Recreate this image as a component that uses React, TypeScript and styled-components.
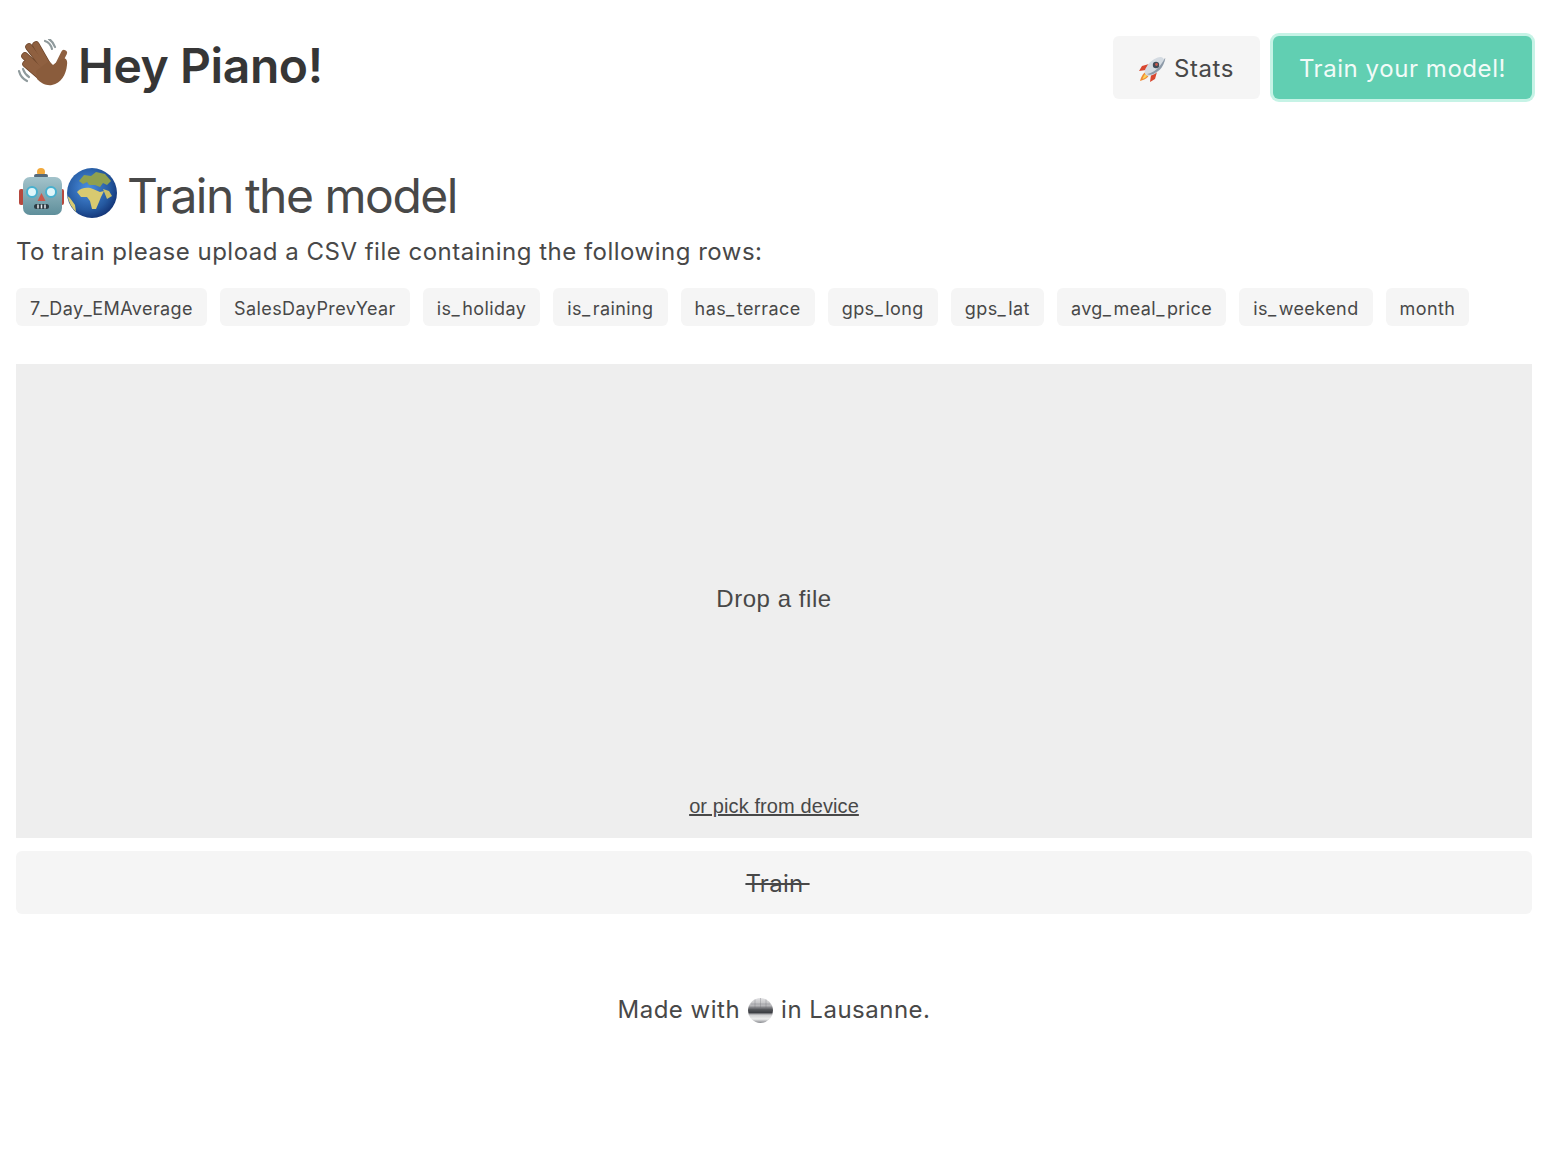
import React from "react";
import styled, { createGlobalStyle } from "styled-components";

const GlobalStyle = createGlobalStyle`
  html, body {
    margin: 0;
    padding: 0;
    background: #fff;
    color: #484848;
    font-family: Inter, "Liberation Sans", sans-serif;
  }
  * { box-sizing: border-box; }
`;

const Page = styled.div`
  padding: 36px 12px 0 16px;
  min-height: 1172px;
`;

const Header = styled.header`
  display: flex;
  justify-content: space-between;
  align-items: center;
  height: 63px;
`;

const Title = styled.h1`
  display: flex;
  align-items: center;
  gap: 8px;
  margin: 0;
  padding-bottom: 4px;
  font-size: 48px;
  line-height: 60px;
  font-weight: 600;
  letter-spacing: -0.4px;
  color: #363636;
`;

const Nav = styled.nav`
  display: flex;
  gap: 13px;
`;

const Button = styled.button<{ $primary?: boolean }>`
  display: flex;
  align-items: center;
  justify-content: center;
  gap: 8px;
  height: 63px;
  padding: 1px 26px 0;
  border: 0;
  border-radius: 6px;
  font-family: inherit;
  font-size: 24px;
  letter-spacing: 0.56px;
  background: ${(p) => (p.$primary ? "#61cfb2" : "#f5f5f5")};
  color: ${(p) => (p.$primary ? "#f2fbf8" : "#484848")};
  box-shadow: ${(p) => (p.$primary ? "0 0 0 3px #c6f3e6" : "none")};
`;

const Section = styled.section`
  margin-top: 64px;
`;

const Heading = styled.h2`
  display: flex;
  align-items: center;
  margin: 0;
  height: 64px;
  font-size: 48px;
  font-weight: 400;
  letter-spacing: -1.48px;
  color: #484848;
`;

const EmojiPair = styled.span`
  display: flex;
  align-items: center;
  gap: 1px;
  margin: 0 10px 4px 0;
`;

const Lead = styled.p`
  margin: 10px 0 0;
  font-size: 24px;
  line-height: 30px;
  letter-spacing: 0.5px;
`;

const Chips = styled.div`
  display: flex;
  gap: 13px;
  margin-top: 21px;
`;

const Chip = styled.span`
  display: flex;
  align-items: center;
  height: 38px;
  padding: 2px 14px 0;
  border-radius: 6px;
  background: #f5f5f5;
  font-size: 18px;
  letter-spacing: 0.42px;
  white-space: pre;
`;

const Underscore = styled.span<{ $tight?: boolean }>`
  letter-spacing: ${(p) => (p.$tight ? "0.5px" : "2.5px")};
`;

const DropZone = styled.div`
  display: flex;
  flex-direction: column;
  align-items: center;
  height: 474px;
  margin-top: 38px;
  padding: 220px 0 20px;
  background: #eee;
  font-family: "Liberation Sans", Arial, sans-serif;
`;

const DropText = styled.div`
  font-size: 24px;
  line-height: 30px;
  letter-spacing: 0.55px;
`;

const PickLink = styled.a`
  margin-top: auto;
  font-size: 20px;
  line-height: 24px;
  letter-spacing: 0.1px;
  color: #484848;
  text-decoration: underline;
`;

const TrainButton = styled.button`
  display: block;
  width: 100%;
  height: 63px;
  margin-top: 13px;
  padding: 1px 0 0;
  border: 0;
  border-radius: 6px;
  background: #f5f5f5;
  font-family: inherit;
  font-size: 24px;
  letter-spacing: 0.3px;
  color: #484848;
`;

const Struck = styled.span`
  margin-right: -7px;
  white-space: pre;
  word-spacing: -1px;
  text-decoration: line-through;
`;

const Footer = styled.footer`
  display: flex;
  justify-content: center;
  align-items: center;
  gap: 8px;
  margin-top: 79px;
  font-size: 24px;
  line-height: 34px;
  letter-spacing: 0.5px;
`;

const WaveIcon = () => (
  <svg width="54" height="54" viewBox="0 0 54 54" fill="none" strokeLinecap="round">
    <g stroke="#8f9a9c" strokeWidth="2.200">
      <path d="M29 2c3 1 6 4 7 8" />
      <path d="M33 0c3 2 5 5 6 8" />
      <path d="M3 32c1 4 4 8 8 10" />
      <path d="M7 30c1 3 3 6 6 8" />
    </g>
    <g stroke="#6b4328" strokeWidth="7.500">
      <path d="M32 27L20 6" />
      <path d="M28 28L13 8" />
      <path d="M25 32L9 17" />
      <path d="M24 37L10 25" />
    </g>
    <g stroke="#8f6040" strokeWidth="6">
      <path d="M32 27L20 6" />
      <path d="M28 28L13 8" />
      <path d="M25 32L9 17" />
      <path d="M24 37L10 25" />
      <path d="M42 26L48 14" />
    </g>
    <path
      d="M20 32L33 22L37 26C39 24 43 22 46 20C49 18 52 21 51 26C50 36 45 44 36 46C30 47 25 44 21 40z"
      fill="#8a5c3c"
    />
  </svg>
);

const RobotIcon = () => (
  <svg width="50" height="50" viewBox="0 0 50 50">
    <defs>
      <linearGradient id="head" x1="0" y1="0" x2="0" y2="1">
        <stop offset="0%" stopColor="#a3c3cb" />
        <stop offset="100%" stopColor="#5f8f9b" />
      </linearGradient>
    </defs>
    <circle cx="25" cy="4" r="4" fill="#f2a93b" />
    <rect x="18" y="6" width="14" height="4" rx="2" fill="#55697a" />
    <rect x="3" y="21" width="5" height="16" rx="2" fill="#b5483e" />
    <rect x="43" y="21" width="5" height="16" rx="2" fill="#b5483e" />
    <rect x="7" y="9" width="39" height="38" rx="7" fill="url(#head)" />
    <circle cx="16" cy="24" r="5" fill="#dff6fa" stroke="#47b0cf" strokeWidth="2" />
    <circle cx="35" cy="24" r="5" fill="#dff6fa" stroke="#47b0cf" strokeWidth="2" />
    <path d="M25.500 25l4 8h-8z" fill="#c9584c" />
    <rect x="18" y="36" width="15" height="5" rx="2.500" fill="#2c3a42" />
    <path d="M22 36.500v4M25.500 36.500v4M29 36.500v4" stroke="#e5ecef" strokeWidth="1.500" />
  </svg>
);

const GlobeIcon = () => (
  <svg width="50" height="50" viewBox="0 0 50 50">
    <defs>
      <radialGradient id="sea" cx="42%" cy="40%" r="64%">
        <stop offset="0%" stopColor="#4b8fe0" />
        <stop offset="70%" stopColor="#24589f" />
        <stop offset="100%" stopColor="#123274" />
      </radialGradient>
    </defs>
    <circle cx="25" cy="25" r="25" fill="url(#sea)" />
    <path
      d="M12 13L17 7L24 8L29 4L38 6L44 13L40 17L36 15L33 19L28 17L22 17L20 14L16 16z"
      fill="#8fa04f"
    />
    <path
      d="M10 24C14 19 22 19 26 21L33 24L37 23L34 29L32 34L29 41L25 41L23 33L20 29L14 29z"
      fill="#d8ca70"
    />
    <path d="M36 21L42 23L45 28L40 31z" fill="#c9bf68" />
    <path d="M0.500 28C2 35 5 40 9 44L8 37L3 30z" fill="#d8ca70" />
  </svg>
);

const RocketIcon = () => (
  <svg width="27" height="27" viewBox="0 0 27 27">
    <path d="M10 9L3 11L0 16L7 15z" fill="#d9472f" />
    <path d="M18 17L16 24L11 27L12 20z" fill="#d9472f" />
    <path d="M7 17C4 18 2 22 1 26C5 25 9 23 10 20z" fill="#f08a35" />
    <path d="M6 19C5 21 4 22 3.500 24C5 23.500 7 22.500 8 21z" fill="#f8d45a" />
    <ellipse cx="15.500" cy="11.500" rx="12" ry="6.200" transform="rotate(-43 15.500 11.500)" fill="#d4dbe2" />
    <path d="M8 19C14 18 21 13 26 3C27 2 25 12 19 16C15 19 11 21 8 19z" fill="#8d9aa8" />
    <circle cx="17" cy="10" r="3.200" fill="#3f4a57" />
    <circle cx="17.500" cy="9.500" r="1.400" fill="#c9574a" />
  </svg>
);

const DiscoIcon = () => (
  <svg width="25" height="25" viewBox="0 0 25 25">
    <defs>
      <linearGradient id="ball" x1="0" y1="0" x2="0" y2="1">
        <stop offset="0%" stopColor="#e2e2e4" />
        <stop offset="30%" stopColor="#b7b7ba" />
        <stop offset="46%" stopColor="#55575b" />
        <stop offset="58%" stopColor="#3d3f44" />
        <stop offset="68%" stopColor="#d0d0d2" />
        <stop offset="84%" stopColor="#eeeeee" />
        <stop offset="100%" stopColor="#85878c" />
      </linearGradient>
    </defs>
    <circle cx="12.500" cy="12.500" r="12.500" fill="url(#ball)" />
    <path
      d="M3 6h19M1 10h23M7 1.500v10M12.500 0v11M18 1.500v10"
      stroke="#6f7075"
      strokeOpacity="0.45"
      strokeWidth="0.7"
    />
  </svg>
);

const columns = [
  "7_Day_EMAverage",
  "SalesDayPrevYear",
  "is_holiday",
  "is_raining",
  "has_terrace",
  "gps_long",
  "gps_lat",
  "avg_meal_price",
  "is_weekend",
  "month",
];

// the underscores in the reference are wider than this Inter's,
// except next to the kerned capitals of the first column
const chipLabel = (name: string) =>
  name.split("_").map((part, i) => (
    <React.Fragment key={i}>
      {i > 0 && <Underscore $tight={name.startsWith("7")}>_</Underscore>}
      {part}
    </React.Fragment>
  ));

export default function App() {
  return (
    <Page>
      <GlobalStyle />
      <Header>
        <Title>
          <WaveIcon />
          Hey Piano!
        </Title>
        <Nav>
          <Button>
            <RocketIcon />
            Stats
          </Button>
          <Button $primary>Train your model!</Button>
        </Nav>
      </Header>
      <Section>
        <Heading>
          <EmojiPair>
            <RobotIcon />
            <GlobeIcon />
          </EmojiPair>
          Train the model
        </Heading>
        <Lead>To train please upload a CSV file containing the following rows:</Lead>
        <Chips>
          {columns.map((name) => (
            <Chip key={name}>
              <span>{chipLabel(name)}</span>
            </Chip>
          ))}
        </Chips>
        <DropZone>
          <DropText>Drop a file</DropText>
          <PickLink href="#">or pick from device</PickLink>
        </DropZone>
        <TrainButton>
          <Struck>{"Train "}</Struck>
        </TrainButton>
      </Section>
      <Footer>
        Made with
        <DiscoIcon />
        in Lausanne.
      </Footer>
    </Page>
  );
}
